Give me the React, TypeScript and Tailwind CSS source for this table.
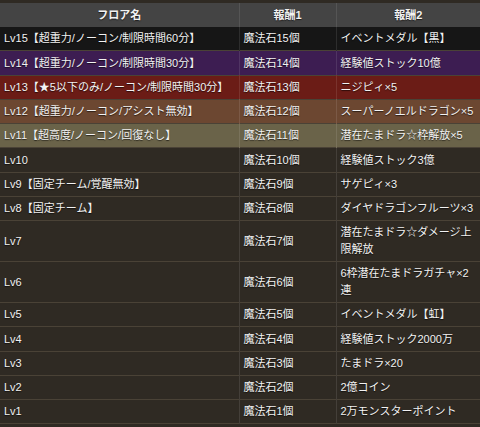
import React from "react"

type Row = {
  floor: string
  reward1: string
  reward2: string
  tone?: string
}

const rows: Row[] = [
  { floor: "Lv15【超重力/ノーコン/制限時間60分】", reward1: "魔法石15個", reward2: "イベントメダル【黒】", tone: "bg-[#161616]" },
  { floor: "Lv14【超重力/ノーコン/制限時間30分】", reward1: "魔法石14個", reward2: "経験値ストック10億", tone: "bg-[#3d1d52]" },
  { floor: "Lv13【★5以下のみ/ノーコン/制限時間30分】", reward1: "魔法石13個", reward2: "ニジピィ×5", tone: "bg-[#6b1c16]" },
  { floor: "Lv12【超重力/ノーコン/アシスト無効】", reward1: "魔法石12個", reward2: "スーパーノエルドラゴン×5", tone: "bg-[#6c4731]" },
  { floor: "Lv11【超高度/ノーコン/回復なし】", reward1: "魔法石11個", reward2: "潜在たまドラ☆枠解放×5", tone: "bg-[#6a6349]" },
  { floor: "Lv10", reward1: "魔法石10個", reward2: "経験値ストック3億" },
  { floor: "Lv9【固定チーム/覚醒無効】", reward1: "魔法石9個", reward2: "サゲピィ×3" },
  { floor: "Lv8【固定チーム】", reward1: "魔法石8個", reward2: "ダイヤドラゴンフルーツ×3" },
  { floor: "Lv7", reward1: "魔法石7個", reward2: "潜在たまドラ☆ダメージ上限解放" },
  { floor: "Lv6", reward1: "魔法石6個", reward2: "6枠潜在たまドラガチャ×2連" },
  { floor: "Lv5", reward1: "魔法石5個", reward2: "イベントメダル【虹】" },
  { floor: "Lv4", reward1: "魔法石4個", reward2: "経験値ストック2000万" },
  { floor: "Lv3", reward1: "魔法石3個", reward2: "たまドラ×20" },
  { floor: "Lv2", reward1: "魔法石2個", reward2: "2億コイン" },
  { floor: "Lv1", reward1: "魔法石1個", reward2: "2万モンスターポイント" },
]

const cell = "align-middle px-[4px] py-[3.25px] leading-[16.75px]"

export default function App() {
  return (
    <div
      className="w-[480px] h-[427px] overflow-hidden bg-[#2f2a23] pt-[3px] text-[11px] text-[#f2f2f2] [text-shadow:0_1px_1px_rgba(0,0,0,0.6)]"
      style={{ fontFamily: '"Liberation Sans", "Noto Sans CJK JP", sans-serif' }}
    >
      <table className="w-full table-fixed border-collapse">
        <colgroup>
          <col className="w-[239px]" />
          <col className="w-[97px]" />
          <col className="w-[144px]" />
        </colgroup>
        <thead>
          <tr className="bg-[#444444] h-[24px]">
            <th className="font-bold text-center border-r border-[#555555]">フロア名</th>
            <th className="font-bold text-center border-r border-[#555555]">報酬1</th>
            <th className="font-bold text-center">報酬2</th>
          </tr>
        </thead>
        <tbody>
          {rows.map((r) => (
            <tr key={r.floor} className={`${r.tone ?? ""} border-b border-[#4a4236]`}>
              <td className={`${cell} border-r border-[#ffffff1a] whitespace-nowrap`}>{r.floor}</td>
              <td className={`${cell} border-r border-[#ffffff1a]`}>{r.reward1}</td>
              <td className={`${cell} pr-[6px]`}>{r.reward2}</td>
            </tr>
          ))}
        </tbody>
      </table>
    </div>
  )
}
